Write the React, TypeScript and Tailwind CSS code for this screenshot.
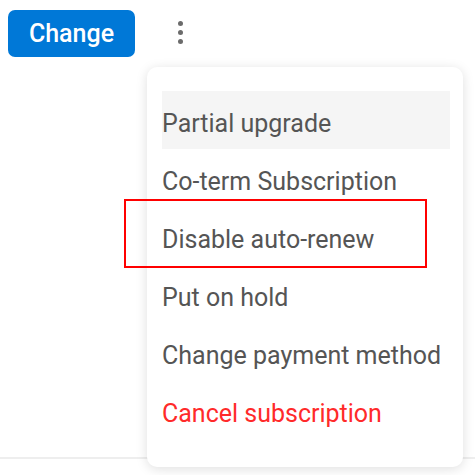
import { useState } from "react";

const items = [
  "Partial upgrade",
  "Co-term Subscription",
  "Disable auto-renew",
  "Put on hold",
  "Change payment method",
];

const App = () => {
  const [hovered] = useState(0);

  return (
    <div className="relative w-[475px] h-[475px] bg-white overflow-hidden font-['Roboto','Liberation_Sans',sans-serif]">
      {/* toolbar */}
      <div className="flex items-center pt-[10px] pl-[8px]">
        <button className="h-[47px] w-[127px] rounded-[7px] bg-[#0078d7] text-white text-[25px] font-medium leading-none">
          Change
        </button>
        <div className="ml-[43px] mb-[3px] flex flex-col gap-[4px] items-center">
          <span className="block w-[5px] h-[5px] rounded-full bg-[#6b6b6b]" />
          <span className="block w-[5px] h-[5px] rounded-full bg-[#6b6b6b]" />
          <span className="block w-[5px] h-[5px] rounded-full bg-[#6b6b6b]" />
        </div>
      </div>

      <div className="mt-[400px] border-b-2 border-[#eeeeee]" />

      {/* dropdown */}
      <div className="absolute left-[147px] top-[67px] w-[316px] rounded-[10px] bg-white pt-[24px] pb-[28px] pl-[15px] pr-[13px] shadow-[0_2px_12px_rgba(0,0,0,0.13)]">
        {items.map((label, i) => (
          <div
            key={label}
            className={`h-[58px] pt-[7px] flex items-center text-[25px] text-[#555555] whitespace-nowrap ${
              i === hovered ? "bg-[#f5f5f5]" : ""
            }`}
          >
            {label}
          </div>
        ))}
        <div className="h-[58px] pt-[7px] flex items-center text-[25px] text-[#ff2a2a] whitespace-nowrap">
          Cancel subscription
        </div>
      </div>

      {/* annotation */}
      <div className="absolute left-[124px] top-[199px] w-[303px] h-[69px] border-2 border-[#ff0000]" />
    </div>
  );
};

export default App;
